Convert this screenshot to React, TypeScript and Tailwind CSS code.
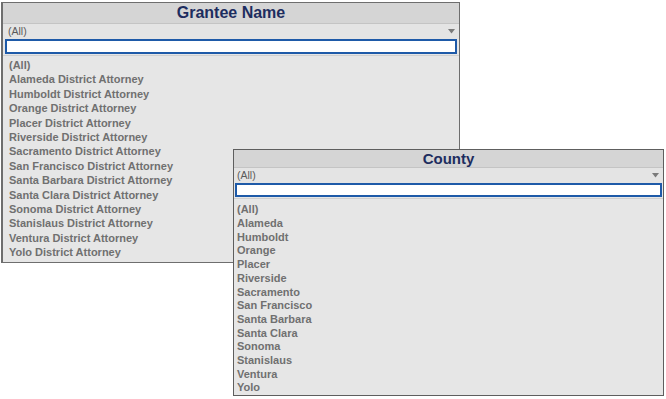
import React from "react";

const grantees = [
  "(All)",
  "Alameda District Attorney",
  "Humboldt District Attorney",
  "Orange District Attorney",
  "Placer District Attorney",
  "Riverside District Attorney",
  "Sacramento District Attorney",
  "San Francisco District Attorney",
  "Santa Barbara District Attorney",
  "Santa Clara District Attorney",
  "Sonoma District Attorney",
  "Stanislaus District Attorney",
  "Ventura District Attorney",
  "Yolo District Attorney",
];

const counties = [
  "(All)",
  "Alameda",
  "Humboldt",
  "Orange",
  "Placer",
  "Riverside",
  "Sacramento",
  "San Francisco",
  "Santa Barbara",
  "Santa Clara",
  "Sonoma",
  "Stanislaus",
  "Ventura",
  "Yolo",
];

function Arrow() {
  return (
    <svg width="7" height="5" viewBox="0 0 7 5" className="mr-[4px]">
      <path d="M0 0 L7 0 L3.5 4.5 Z" fill="#7a7a7a" />
    </svg>
  );
}

export default function App() {
  return (
    <div
      className="relative w-[666px] h-[399px] bg-white overflow-hidden"
      style={{ fontFamily: '"Liberation Sans", Arial, sans-serif' }}
    >
      {/* Grantee Name panel */}
      <div className="ml-[1px] mt-[2px] w-[459px] h-[261px] bg-[#e6e6e6] border border-[#6e6e6e] border-l-2 flex flex-col">
        <div className="h-[20px] bg-[#d5d5d5] flex items-center justify-center text-[16px] font-bold text-[#1d2d5f] leading-none">
          Grantee Name
        </div>
        <div className="h-[16px] bg-[#e4e4e4] border-t border-[#c4c4c4] flex items-center justify-between pl-[5px]">
          <span className="text-[10.5px] text-[#5a5a5a]">(All)</span>
          <Arrow />
        </div>
        <div className="mx-[2px] h-[15px] bg-white border-2 border-[#1e5aa8]" />
        <div className="border-t border-[#cfcfcf] mt-[1px] pt-[2px] pl-[6px] flex flex-col">
          {grantees.map((g) => (
            <div key={g} className="h-[14.4px] leading-[14.4px] text-[11px] font-bold text-[#707070] whitespace-nowrap">
              {g}
            </div>
          ))}
        </div>
      </div>

      {/* County panel (overlapping) */}
      <div className="absolute left-[233px] top-[149px] w-[431px] h-[247px] bg-[#e6e6e6] border border-[#5e5e5e] flex flex-col">
        <div className="h-[19px] bg-[#d5d5d5] flex items-center justify-center text-[15px] font-bold text-[#1d2d5f] leading-none">
          County
        </div>
        <div className="h-[16px] bg-[#e4e4e4] border-t border-[#c4c4c4] flex items-center justify-between pl-[3px]">
          <span className="text-[10.5px] text-[#5a5a5a]">(All)</span>
          <Arrow />
        </div>
        <div className="mx-[1px] h-[15px] bg-white border-2 border-[#1e5aa8]" />
        <div className="border-t border-[#cfcfcf] mt-[1px] pt-[4px] pl-[3px] flex flex-col">
          {counties.map((c) => (
            <div key={c} className="h-[13.7px] leading-[13.7px] text-[11px] font-bold text-[#707070] whitespace-nowrap">
              {c}
            </div>
          ))}
        </div>
      </div>
    </div>
  );
}
